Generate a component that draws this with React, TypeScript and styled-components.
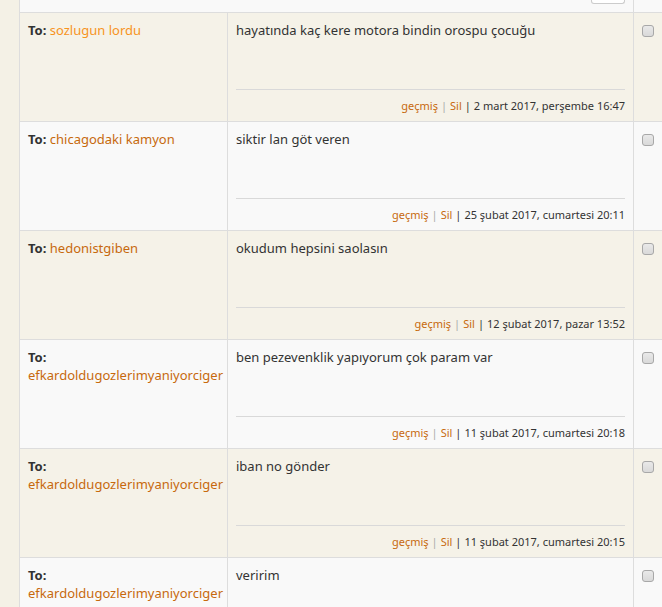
import styled, { createGlobalStyle } from "styled-components";

const GlobalStyle = createGlobalStyle`
  html, body {
    margin: 0;
    padding: 0;
    background: #f4f1e6;
    overflow: hidden;
  }
  body {
    font-family: "Noto Sans", "Open Sans", sans-serif;
    color: #333;
  }
`;

const Page = styled.div`
  padding-left: 19px;
  width: 700px;
`;

const Table = styled.table`
  border-collapse: collapse;
  table-layout: fixed;
  width: 680px;
  font-size: 13px;
  line-height: 18px;
`;

const Row = styled.tr<{ $odd: boolean }>`
  background: ${(p) => (p.$odd ? "#f5f2e8" : "#f9f9f9")};
`;

const Cell = styled.td`
  border: 1px solid #dddddd;
  padding: 8px;
  vertical-align: top;
`;

const TopCell = styled.td`
  border: 1px solid #dddddd;
  border-top: none;
  padding: 0 8px;
  height: 12px;
  font-size: 0;
  line-height: 0;
  vertical-align: top;
`;

const TopButton = styled.div`
  width: 32px;
  height: 3px;
  margin-left: auto;
  background: #fff;
  border: 1px solid #cccccc;
  border-top: none;
  border-radius: 0 0 3px 3px;
`;

const Label = styled.b`
  font-weight: 700;
  color: #333;
`;

const UserLink = styled.a<{ $hover?: boolean }>`
  color: ${(p) => (p.$hover ? "#f7941e" : "#c7690d")};
  text-decoration: none;
  cursor: pointer;
`;

const Message = styled.div`
  min-height: 68px;
  color: #333;
`;

const Footer = styled.div`
  border-top: 1px solid #d9d9d9;
  padding-top: 8px;
  font-size: 11px;
  line-height: 15px;
  text-align: right;
  color: #333;
`;

const FooterLink = styled.a`
  color: #c7690d;
  text-decoration: none;
`;

const Pipe = styled.span<{ $light?: boolean }>`
  color: ${(p) => (p.$light ? "#aaaaaa" : "#333")};
  margin: 0 3px;
`;

const Check = styled.input`
  appearance: none;
  margin: 4px 0 0 0;
  width: 12px;
  height: 12px;
  border: 1px solid #a8a8a8;
  border-radius: 3px;
  background: linear-gradient(#e9e9e9, #d9d9d9);
  display: block;
`;

type Msg = {
  to: string;
  text: string;
  date: string;
  hover?: boolean;
};

const messages: Msg[] = [
  {
    to: "sozlugun lordu",
    text: "hayatında kaç kere motora bindin orospu çocuğu",
    date: "2 mart 2017, perşembe 16:47",
    hover: true,
  },
  {
    to: "chicagodaki kamyon",
    text: "siktir lan göt veren",
    date: "25 şubat 2017, cumartesi 20:11",
  },
  {
    to: "hedonistgiben",
    text: "okudum hepsini saolasın",
    date: "12 şubat 2017, pazar 13:52",
  },
  {
    to: "efkardoldugozlerimyaniyorciger",
    text: "ben pezevenklik yapıyorum çok param var",
    date: "11 şubat 2017, cumartesi 20:18",
  },
  {
    to: "efkardoldugozlerimyaniyorciger",
    text: "iban no gönder",
    date: "11 şubat 2017, cumartesi 20:15",
  },
  {
    to: "efkardoldugozlerimyaniyorciger",
    text: "veririm",
    date: "11 şubat 2017, cumartesi 20:11",
  },
];

export default function App() {
  return (
    <Page>
      <GlobalStyle />
      <Table>
        <colgroup>
          <col style={{ width: 208 }} />
          <col style={{ width: 406 }} />
          <col />
        </colgroup>
        <tbody>
          <Row $odd={false}>
            <TopCell colSpan={2}>
              <TopButton />
            </TopCell>
            <TopCell />
          </Row>
          {messages.map((m, i) => (
            <Row key={i} $odd={i % 2 === 0}>
              <Cell>
                <Label>To:</Label> <UserLink $hover={m.hover}>{m.to}</UserLink>
              </Cell>
              <Cell>
                <Message>{m.text}</Message>
                <Footer>
                  <FooterLink>geçmiş</FooterLink>
                  <Pipe $light>|</Pipe>
                  <FooterLink>Sil</FooterLink>
                  <Pipe>|</Pipe>
                  {m.date}
                </Footer>
              </Cell>
              <Cell>
                <Check type="checkbox" />
              </Cell>
            </Row>
          ))}
        </tbody>
      </Table>
    </Page>
  );
}
